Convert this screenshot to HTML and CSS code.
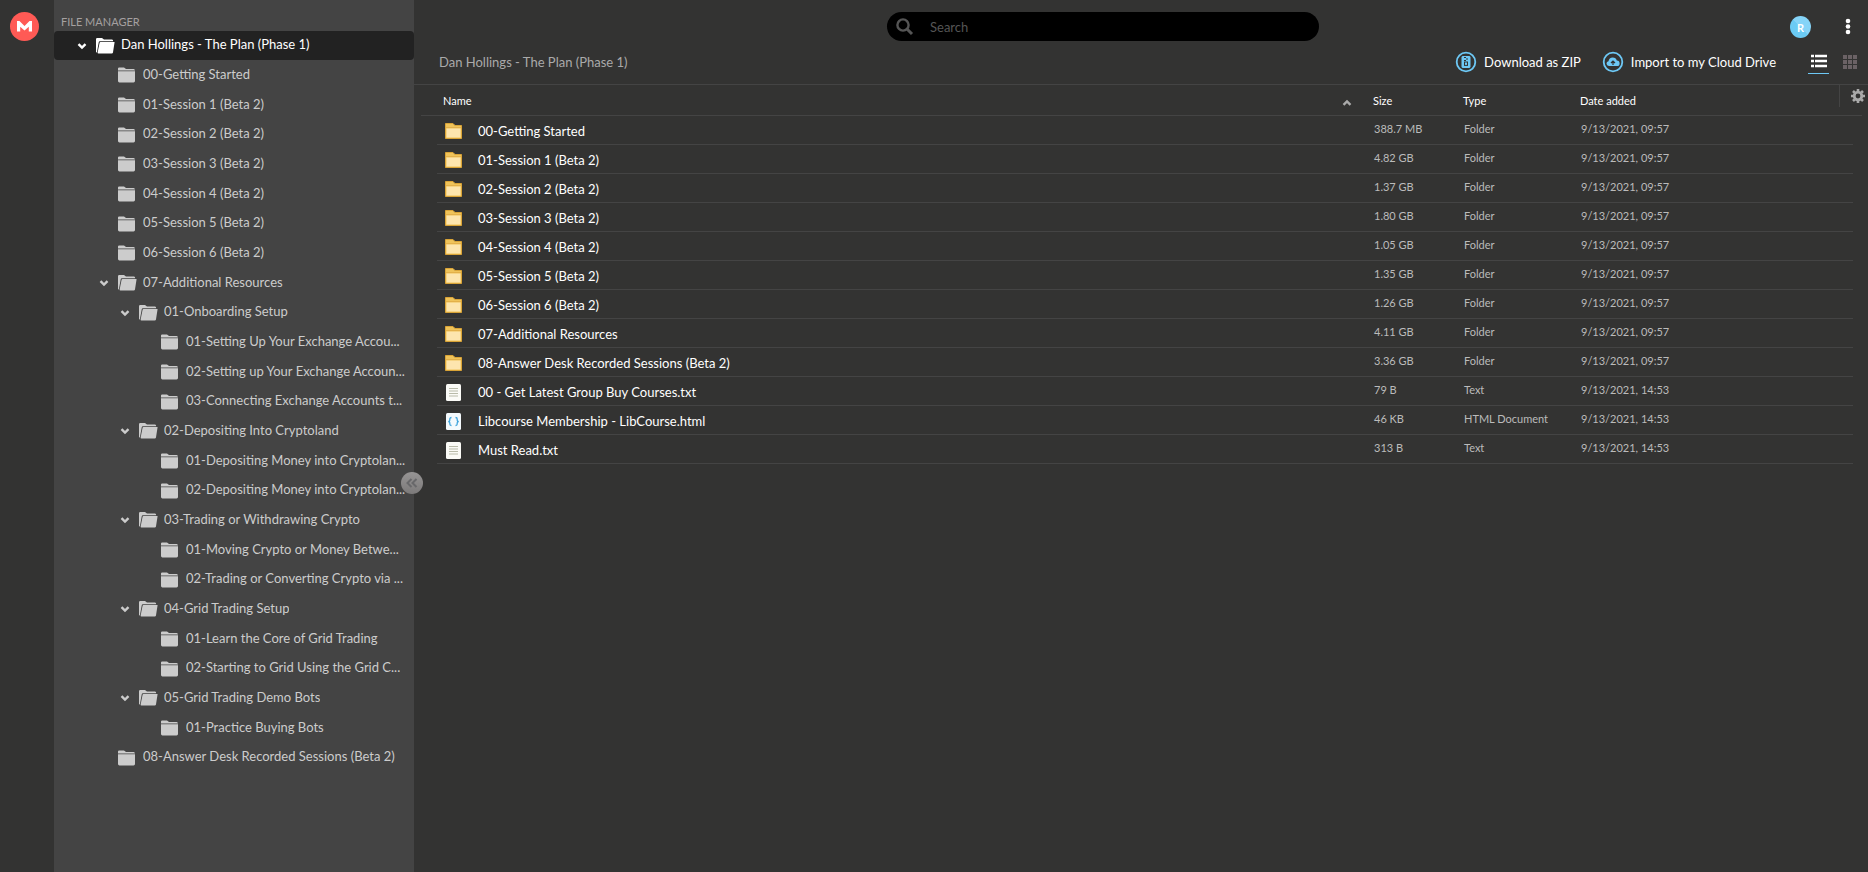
FILE: index.html
```html
<!DOCTYPE html>
<html lang="en">
<head>
  <meta charset="UTF-8" />
  <title>Dan Hollings - The Plan (Phase 1)</title>
  <link rel="stylesheet" href="styles.css">
</head>
<body>
  <!-- shared icons -->
  <svg class="sprite" width="0" height="0">
    <symbol id="i-arrow" viewBox="0 0 10 10"><path d="M1.5 3.2 L5 6.6 L8.5 3.2" fill="none" stroke="currentColor" stroke-width="2.4"/></symbol>
    <symbol id="i-closed" viewBox="0 0 20 18">
      <path d="M1 4.6 V2.6 Q1 1.4 2.2 1.4 H7 L9 3 H16.6 Q18 3 18 4.6 Z" fill="currentColor"/>
      <path d="M1 5.3 H18 V15 Q18 16.4 16.6 16.4 H2.4 Q1 16.4 1 15 Z" fill="currentColor"/>
    </symbol>
    <symbol id="i-open" viewBox="0 0 20 18">
      <path d="M1 15 V2.2 Q1 1 2.2 1 H7 L9 2.6 H17 Q18.2 2.6 18.2 4.3 H4.8 Q4 4.3 3.8 5 L1.8 15.8 Z" fill="currentColor"/>
      <path d="M5.4 5 H19.6 L18 15.4 Q17.8 16.4 16.6 16.4 H3.4 Q2.4 16.4 2.6 15.4 L4.6 5.8 Q4.8 5 5.4 5 Z" fill="currentColor"/>
    </symbol>
    <symbol id="i-folder" viewBox="0 0 17 17">
      <path d="M0.5 15.5 V0.5 H8 L10 2.5 H16.5 V15.5 Z" fill="#efc35a" stroke="#d9a336"/>
      <path d="M1.5 5.5 H15.5 V14.5 H1.5 Z" fill="#fde5ae"/>
      <path d="M1 4.5 H16" stroke="#e3b04a"/>
    </symbol>
    <symbol id="i-text" viewBox="0 0 17 17">
      <rect x="1" y="0" width="15" height="17" rx="1.5" fill="#fbfbf7"/>
      <path d="M4 4.5 H13 M4 7 H13 M4 9.5 H13 M4 12 H13" stroke="#b9bba9"/>
    </symbol>
    <symbol id="i-html" viewBox="0 0 17 17">
      <rect x="1" y="0" width="15" height="17" rx="1.5" fill="#f4fafd"/>
      <path d="M6.5 4.5 Q4.8 4.5 4.8 6 V7.2 Q4.8 8.5 3.2 8.5 Q4.8 8.5 4.8 9.8 V11 Q4.8 12.5 6.5 12.5 M10.5 4.5 Q12.2 4.5 12.2 6 V7.2 Q12.2 8.5 13.8 8.5 Q12.2 8.5 12.2 9.8 V11 Q12.2 12.5 10.5 12.5" fill="none" stroke="#3fa4dc" stroke-width="1.3"/>
    </symbol>
  </svg>

  <div class="app">
    <nav class="rail">
      <a href="#" class="logo" aria-label="Home">
        <svg width="29" height="29" viewBox="0 0 29 29">
          <circle cx="14.5" cy="14.5" r="14.5" fill="#ff5a55"/>
          <path d="M7 19.5 V9 H9.5 L14.5 14 L19.5 9 H22 V19.5 H18.8 V14.7 L14.5 18.6 L10.2 14.7 V19.5 Z" fill="#fff"/>
        </svg>
      </a>
    </nav>

    <aside class="sidebar">
      <h2>FILE MANAGER</h2>
      <a href="#" class="node root"><svg class="arrow"><use href="#i-arrow"/></svg><svg class="dir"><use href="#i-open"/></svg><span>Dan Hollings - The Plan (Phase 1)</span></a>
      <div class="tree">
        <a href="#" class="node l1"><svg class="dir"><use href="#i-closed"/></svg><span>00-Getting Started</span></a>
        <a href="#" class="node l1"><svg class="dir"><use href="#i-closed"/></svg><span>01-Session 1 (Beta 2)</span></a>
        <a href="#" class="node l1"><svg class="dir"><use href="#i-closed"/></svg><span>02-Session 2 (Beta 2)</span></a>
        <a href="#" class="node l1"><svg class="dir"><use href="#i-closed"/></svg><span>03-Session 3 (Beta 2)</span></a>
        <a href="#" class="node l1"><svg class="dir"><use href="#i-closed"/></svg><span>04-Session 4 (Beta 2)</span></a>
        <a href="#" class="node l1"><svg class="dir"><use href="#i-closed"/></svg><span>05-Session 5 (Beta 2)</span></a>
        <a href="#" class="node l1"><svg class="dir"><use href="#i-closed"/></svg><span>06-Session 6 (Beta 2)</span></a>
        <a href="#" class="node l1 open"><svg class="arrow"><use href="#i-arrow"/></svg><svg class="dir"><use href="#i-open"/></svg><span>07-Additional Resources</span></a>
        <a href="#" class="node l2 open"><svg class="arrow"><use href="#i-arrow"/></svg><svg class="dir"><use href="#i-open"/></svg><span>01-Onboarding Setup</span></a>
        <a href="#" class="node l3"><svg class="dir"><use href="#i-closed"/></svg><span>01-Setting Up Your Exchange Accou...</span></a>
        <a href="#" class="node l3"><svg class="dir"><use href="#i-closed"/></svg><span>02-Setting up Your Exchange Accoun...</span></a>
        <a href="#" class="node l3"><svg class="dir"><use href="#i-closed"/></svg><span>03-Connecting Exchange Accounts t...</span></a>
        <a href="#" class="node l2 open"><svg class="arrow"><use href="#i-arrow"/></svg><svg class="dir"><use href="#i-open"/></svg><span>02-Depositing Into Cryptoland</span></a>
        <a href="#" class="node l3"><svg class="dir"><use href="#i-closed"/></svg><span>01-Depositing Money into Cryptolan...</span></a>
        <a href="#" class="node l3"><svg class="dir"><use href="#i-closed"/></svg><span>02-Depositing Money into Cryptolan...</span></a>
        <a href="#" class="node l2 open"><svg class="arrow"><use href="#i-arrow"/></svg><svg class="dir"><use href="#i-open"/></svg><span>03-Trading or Withdrawing Crypto</span></a>
        <a href="#" class="node l3"><svg class="dir"><use href="#i-closed"/></svg><span>01-Moving Crypto or Money Betwe...</span></a>
        <a href="#" class="node l3"><svg class="dir"><use href="#i-closed"/></svg><span>02-Trading or Converting Crypto via ...</span></a>
        <a href="#" class="node l2 open"><svg class="arrow"><use href="#i-arrow"/></svg><svg class="dir"><use href="#i-open"/></svg><span>04-Grid Trading Setup</span></a>
        <a href="#" class="node l3"><svg class="dir"><use href="#i-closed"/></svg><span>01-Learn the Core of Grid Trading</span></a>
        <a href="#" class="node l3"><svg class="dir"><use href="#i-closed"/></svg><span>02-Starting to Grid Using the Grid C...</span></a>
        <a href="#" class="node l2 open"><svg class="arrow"><use href="#i-arrow"/></svg><svg class="dir"><use href="#i-open"/></svg><span>05-Grid Trading Demo Bots</span></a>
        <a href="#" class="node l3"><svg class="dir"><use href="#i-closed"/></svg><span>01-Practice Buying Bots</span></a>
        <a href="#" class="node l1"><svg class="dir"><use href="#i-closed"/></svg><span>08-Answer Desk Recorded Sessions (Beta 2)</span></a>
      </div>
      <button class="collapse" aria-label="Collapse panel">
        <svg width="22" height="22" viewBox="0 0 22 22"><path d="M10.5 7 L6.5 11 L10.5 15 M15.5 7 L11.5 11 L15.5 15" fill="none" stroke="#68686a" stroke-width="2"/></svg>
      </button>
    </aside>

    <main>
      <header class="topbar">
        <label class="search">
          <svg width="18" height="18" viewBox="0 0 18 18"><circle cx="7" cy="7" r="5.6" fill="none" stroke="#555" stroke-width="2.4"/><path d="M11 11 L16 16" stroke="#555" stroke-width="3"/></svg>
          <input type="text" placeholder="Search" aria-label="Search">
        </label>
        <div class="user">
          <button class="avatar">R</button>
          <button class="more" aria-label="Menu"><svg width="6" height="18" viewBox="0 0 6 18"><g fill="#fff"><circle cx="3" cy="3" r="2.3"/><circle cx="3" cy="8.5" r="2.3"/><circle cx="3" cy="14" r="2.3"/></g></svg></button>
        </div>
      </header>

      <div class="toolbar">
        <a href="#" class="crumb">Dan Hollings - The Plan (Phase 1)</a>
        <div class="actions">
          <button>
            <svg width="22" height="22" viewBox="0 0 22 22"><circle cx="11" cy="11" r="9.3" fill="none" stroke="#6dc8f5" stroke-width="1.8"/><path d="M6.5 6 L7.5 5 H14.5 L15.5 6 V16 L14.5 17 H7.5 L6.5 16 Z" fill="#6dc8f5"/><path d="M9 6.5 H11 M11 8 H13 M9 9.5 H11" stroke="#333" fill="none"/><rect x="9.5" y="11" width="3" height="3.4" fill="none" stroke="#333"/></svg>
            Download as ZIP
          </button>
          <button>
            <svg width="22" height="22" viewBox="0 0 22 22"><circle cx="11" cy="11" r="9.3" fill="none" stroke="#6dc8f5" stroke-width="1.8"/><path d="M7 15 Q4.5 15 4.5 12.6 Q4.5 10.6 6.5 10.2 Q7 6.4 10.7 6.4 Q14 6.4 14.8 9.6 Q17.6 9.8 17.6 12.4 Q17.6 15 15 15 Z" fill="#6dc8f5"/><path d="M11 14 V10.5 M9 12 L11 10 L13 12" stroke="#333" stroke-width="1.2" fill="none"/></svg>
            Import to my Cloud Drive
          </button>
        </div>
        <div class="views">
          <button class="active" aria-label="List view"><svg width="16" height="14" viewBox="0 0 16 14"><path d="M0 2 H3 M4 2 H16 M0 7 H3 M4 7 H16 M0 12 H3 M4 12 H16" stroke="#fff" stroke-width="2.4"/></svg></button>
          <button aria-label="Grid view"><svg width="14" height="14" viewBox="0 0 14 14"><path d="M0 2 H4 M5 2 H9 M10 2 H14 M0 7 H4 M5 7 H9 M10 7 H14 M0 12 H4 M5 12 H9 M10 12 H14" stroke="#6b6265" stroke-width="4"/></svg></button>
        </div>
      </div>

      <div class="list">
        <table>
          <colgroup><col class="c-edge"><col><col class="c-size"><col class="c-type"><col class="c-date"><col class="c-end"></colgroup>
          <thead>
            <tr><th></th><th><div class="sort">Name <svg class="up"><use href="#i-arrow"/></svg></div></th><th>Size</th><th>Type</th><th>Date added</th><th></th></tr>
          </thead>
          <tbody>
            <tr><td></td><td><svg><use href="#i-folder"/></svg>00-Getting Started</td><td>388.7 MB</td><td>Folder</td><td>9/13/2021, 09:57</td><td></td></tr>
            <tr><td></td><td><svg><use href="#i-folder"/></svg>01-Session 1 (Beta 2)</td><td>4.82 GB</td><td>Folder</td><td>9/13/2021, 09:57</td><td></td></tr>
            <tr><td></td><td><svg><use href="#i-folder"/></svg>02-Session 2 (Beta 2)</td><td>1.37 GB</td><td>Folder</td><td>9/13/2021, 09:57</td><td></td></tr>
            <tr><td></td><td><svg><use href="#i-folder"/></svg>03-Session 3 (Beta 2)</td><td>1.80 GB</td><td>Folder</td><td>9/13/2021, 09:57</td><td></td></tr>
            <tr><td></td><td><svg><use href="#i-folder"/></svg>04-Session 4 (Beta 2)</td><td>1.05 GB</td><td>Folder</td><td>9/13/2021, 09:57</td><td></td></tr>
            <tr><td></td><td><svg><use href="#i-folder"/></svg>05-Session 5 (Beta 2)</td><td>1.35 GB</td><td>Folder</td><td>9/13/2021, 09:57</td><td></td></tr>
            <tr><td></td><td><svg><use href="#i-folder"/></svg>06-Session 6 (Beta 2)</td><td>1.26 GB</td><td>Folder</td><td>9/13/2021, 09:57</td><td></td></tr>
            <tr><td></td><td><svg><use href="#i-folder"/></svg>07-Additional Resources</td><td>4.11 GB</td><td>Folder</td><td>9/13/2021, 09:57</td><td></td></tr>
            <tr><td></td><td><svg><use href="#i-folder"/></svg>08-Answer Desk Recorded Sessions (Beta 2)</td><td>3.36 GB</td><td>Folder</td><td>9/13/2021, 09:57</td><td></td></tr>
            <tr><td></td><td><svg><use href="#i-text"/></svg>00 - Get Latest Group Buy Courses.txt</td><td>79 B</td><td>Text</td><td>9/13/2021, 14:53</td><td></td></tr>
            <tr><td></td><td><svg><use href="#i-html"/></svg>Libcourse Membership - LibCourse.html</td><td>46 KB</td><td>HTML Document</td><td>9/13/2021, 14:53</td><td></td></tr>
            <tr><td></td><td><svg><use href="#i-text"/></svg>Must Read.txt</td><td>313 B</td><td>Text</td><td>9/13/2021, 14:53</td><td></td></tr>
          </tbody>
        </table>
        <button class="settings" aria-label="Column settings">
          <svg width="14" height="14" viewBox="0 0 14 14"><circle cx="7" cy="7" r="3.8" fill="none" stroke="#aaa" stroke-width="2.8"/><path d="M7 0 V2.4 M7 11.6 V14 M0 7 H2.4 M11.6 7 H14 M2 2 L3.7 3.7 M10.3 10.3 L12 12 M2 12 L3.7 10.3 M10.3 3.7 L12 2" stroke="#aaa" stroke-width="2.6"/></svg>
        </button>
      </div>
    </main>
  </div>
</body>
</html>
```

FILE: styles.css
```css
* {
  box-sizing: border-box;
}
body {
  margin: 0;
  background: #333332;
  color: #fff;
  font-family: Lato, "Open Sans", sans-serif;
  font-size: 13px;
}
a {
  color: inherit;
  text-decoration: none;
}
button {
  padding: 0;
  border: 0;
  background: none;
  color: inherit;
  font: inherit;
}
svg {
  display: block;
  flex: none;
}
.sprite {
  position: absolute;
}
.app {
  display: flex;
  min-height: 100vh;
}

/* left rail */
.rail {
  width: 54px;
  flex: none;
  padding: 12px 10px;
}

/* folder tree */
.sidebar {
  position: relative;
  width: 360px;
  flex: none;
  background: #444;
}
.sidebar h2 {
  margin: 0;
  padding: 14px 7px 0;
  height: 31px;
  font-size: 11px;
  line-height: 16px;
  font-weight: 400;
  color: #a5a0a0;
}
.tree {
  display: grid;
  grid-template-columns: minmax(0, 1fr);
  grid-auto-rows: 30px 30px 29px;
}
.node {
  display: flex;
  align-items: center;
  gap: 6px;
  padding-right: 4px;
  color: #ccc;
}
.node span {
  padding-bottom: 3px;
  overflow: hidden;
  text-overflow: ellipsis;
  white-space: nowrap;
}
.arrow {
  width: 10px;
  height: 10px;
  margin-right: 2px;
}
.dir {
  width: 20px;
  height: 18px;
}
.root {
  height: 29px;
  padding-left: 23px;
  background: #222;
  border-radius: 4px;
  color: #fff;
}
.l1 { padding-left: 63px; }
.l1.open { padding-left: 45px; }
.l2.open { padding-left: 66px; }
.l3 { padding-left: 106px; }
.collapse {
  position: absolute;
  top: 472px;
  right: -9px;
  width: 22px;
  height: 22px;
  border-radius: 50%;
  background: linear-gradient(#969494, #7c7a7a);
}

/* header */
main {
  flex: 1;
  min-width: 0;
}
.topbar {
  position: relative;
  display: flex;
  justify-content: center;
  height: 41px;
  padding-top: 12px;
}
.search {
  display: flex;
  align-items: center;
  gap: 14px;
  width: 432px;
  height: 29px;
  margin-right: 76px;
  padding-left: 9px;
  border-radius: 15px;
  background: #000;
}
.search input {
  flex: 1;
  border: 0;
  outline: 0;
  background: none;
  color: #fff;
  font: inherit;
}
.search input::placeholder {
  color: #555;
}
.user {
  position: absolute;
  top: 16px;
  right: 17px;
  display: flex;
  gap: 34px;
}
.avatar {
  width: 21px;
  height: 22px;
  border-radius: 50%;
  background: linear-gradient(45deg, #6bcbf5 50%, #85d4f8 50%);
  font-size: 11px;
  font-weight: 700;
}
.toolbar {
  display: flex;
  align-items: center;
  height: 44px;
  padding: 0 11px 2px 25px;
  border-bottom: 1px solid #444;
}
.crumb {
  margin-right: auto;
  color: #aaa;
}
.actions {
  display: flex;
  gap: 21px;
}
.actions button {
  display: flex;
  align-items: center;
  gap: 7px;
}
.views {
  display: flex;
  gap: 14px;
  margin-left: 32px;
}
.views button {
  display: flex;
  justify-content: center;
  align-items: center;
  height: 24px;
}
.views .active {
  width: 21px;
  border-bottom: 1px solid #6dc8f5;
}

/* file list */
.list {
  position: relative;
  padding: 0 6px 0 7px;
}
table {
  width: 100%;
  table-layout: fixed;
  border-spacing: 0;
}
.c-edge { width: 16px; }
.c-size { width: 90px; }
.c-type { width: 117px; }
.c-date { width: 273px; }
.c-end { width: 9px; }
th, td {
  padding: 0;
  text-align: left;
  border-bottom: 1px solid #444;
}
th {
  height: 31px;
  font-size: 11px;
  font-weight: 400;
}
th:nth-child(2) {
  padding: 0 21px 0 6px;
}
.sort {
  display: flex;
  align-items: center;
  justify-content: space-between;
}
.up {
  width: 10px;
  height: 10px;
  margin-top: 5px;
  color: #aaa;
  transform: rotate(180deg);
}
td {
  height: 29px;
  color: #bbb;
  font-size: 11px;
  line-height: 16px;
  padding: 0 0 3px 1px;
}
td:first-child, td:last-child {
  border-bottom: 0;
}
td:nth-child(2) {
  display: flex;
  align-items: center;
  gap: 16px;
  padding: 2px 0 0 8px;
  color: #fff;
  font-size: 13px;
}
td svg {
  width: 17px;
  height: 17px;
}
.settings {
  position: absolute;
  top: 0;
  right: 0;
  height: 22px;
  padding: 0 3px 0 11px;
  border-left: 1px solid #444;
}
```
